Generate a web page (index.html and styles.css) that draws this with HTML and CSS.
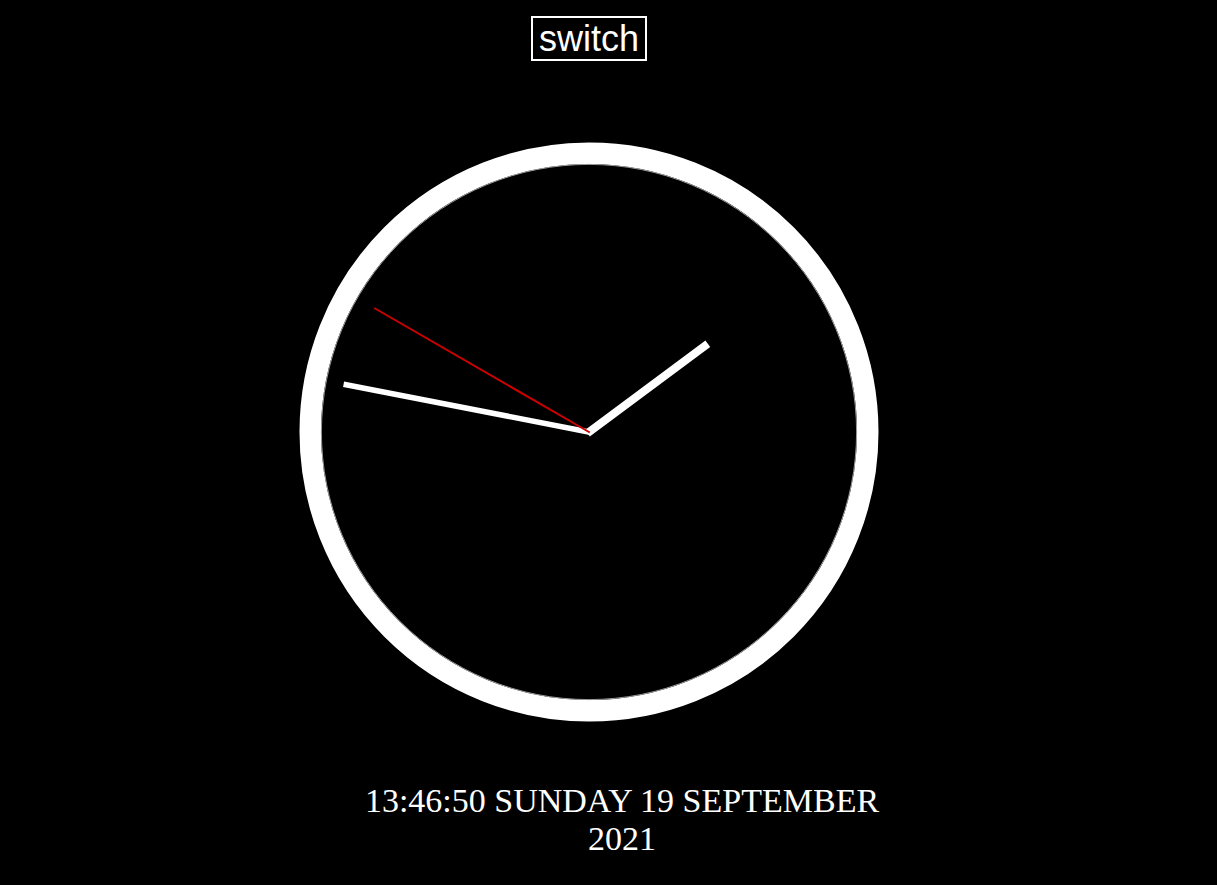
FILE: index.html
```html
<!DOCTYPE html>
<html lang="en">
<head>
<meta charset="utf-8">
<title>Clock</title>
<link rel="stylesheet" href="styles.css">
</head>
<body>
<main class="page">
  <button class="switch" type="button">switch</button>
  <svg class="clock" width="580" height="580" viewBox="0 0 580 580" aria-label="analog clock">
    <circle cx="290" cy="290" r="278.75" fill="#000" stroke="#fff" stroke-width="21.5"/>
    <circle cx="290" cy="290" r="267.6" fill="none" stroke="#9c9c9c" stroke-width="1"/>
    <g transform="translate(290 290)">
      <rect class="hand-minute" x="-2.75" y="-250" width="5.5" height="251" transform="rotate(281)"/>
      <rect class="hand-hour" x="-4" y="-148" width="8" height="150" transform="rotate(53.4)"/>
      <rect class="hand-second" x="-1" y="-248" width="2" height="249" transform="rotate(300)"/>
    </g>
  </svg>
  <div class="datetime">13:46:50 SUNDAY 19 SEPTEMBER 2021</div>
</main>
</body>
</html>
```
FILE: styles.css
```css
html, body {
  margin: 0;
  padding: 0;
  background: #000;
}

.page {
  width: 1178px;
  display: flex;
  flex-direction: column;
  align-items: center;
  padding-top: 16px;
}

.switch {
  font-family: "Liberation Sans", Arial, sans-serif;
  font-size: 36px;
  line-height: 39px;
  color: #fff;
  background: #000;
  border: 2px solid #fff;
  padding: 1px 6px;
  margin: 0;
  cursor: pointer;
}

.clock {
  display: block;
  margin-top: 81px;
}

.hand-hour,
.hand-minute {
  fill: #fff;
}

.hand-second {
  fill: #cc0000;
}

.datetime {
  width: 540px;
  margin-top: 60px;
  margin-left: 66px;
  font-family: "Liberation Serif", "Times New Roman", serif;
  font-size: 34px;
  line-height: 38px;
  color: #fff;
  text-align: center;
}
```
